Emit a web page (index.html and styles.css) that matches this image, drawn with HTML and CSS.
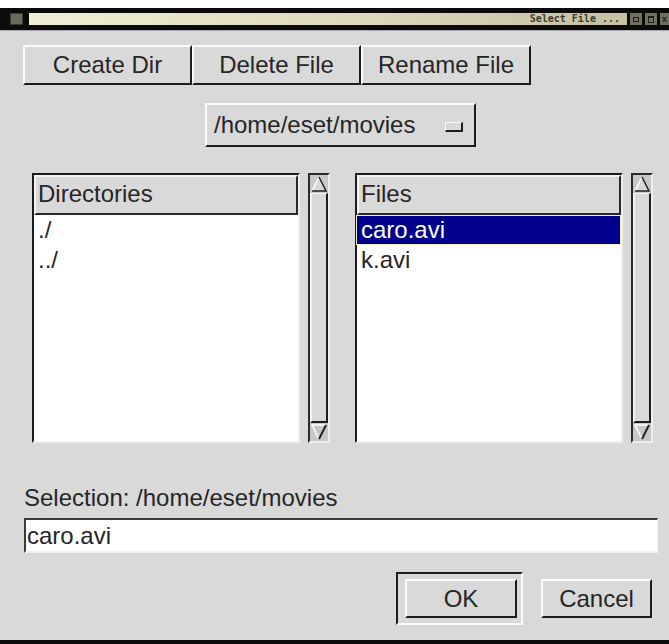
FILE: index.html
```html
<!DOCTYPE html>
<html lang="en">
<head>
<meta charset="utf-8">
<title>Select File</title>
<link rel="stylesheet" href="styles.css">
</head>
<body>
<div class="window">
  <div class="titlebar">
    <div class="tb-menu"></div>
    <div class="tb-title">Select File ...</div>
    <div class="tb-btn"><span class="tb-icon"></span></div>
    <div class="tb-btn"><span class="tb-icon tb-icon-max"></span></div>
    <div class="tb-btn tb-btn-last"><span class="tb-x">x</span></div>
  </div>

  <div class="client">
    <div class="toolbar">
      <button class="btn btn-tool">Create Dir</button>
      <button class="btn btn-tool">Delete File</button>
      <button class="btn btn-tool btn-wide">Rename File</button>
    </div>

    <div class="path-row">
      <button class="btn option-menu">
        <span class="option-label">/home/eset/movies</span>
        <span class="option-indicator"></span>
      </button>
    </div>

    <div class="lists">
      <div class="pane">
        <div class="listbox">
          <div class="list-head">Directories</div>
          <div class="list-body">
            <div class="list-row">./</div>
            <div class="list-row">../</div>
          </div>
        </div>
        <div class="scrollbar">
          <svg class="arrow" width="18" height="18" viewBox="0 0 18 18">
            <polygon points="9,2 2,16 16,16" fill="#d9d9d9"/>
            <polyline points="2,16 9,2" fill="none" stroke="#ffffff" stroke-width="1.5"/>
            <polyline points="9,2 16,16 2,16" fill="none" stroke="#222" stroke-width="1.5"/>
          </svg>
          <div class="slider"></div>
          <svg class="arrow" width="18" height="18" viewBox="0 0 18 18">
            <polygon points="2,2 16,2 9,16" fill="#c8c8c8"/>
            <polyline points="9,16 2,2 16,2" fill="none" stroke="#ffffff" stroke-width="1.5"/>
            <polyline points="16,2 9,16" fill="none" stroke="#222" stroke-width="2"/>
          </svg>
        </div>
      </div>

      <div class="pane">
        <div class="listbox">
          <div class="list-head">Files</div>
          <div class="list-body">
            <div class="list-row selected">caro.avi</div>
            <div class="list-row">k.avi</div>
          </div>
        </div>
        <div class="scrollbar">
          <svg class="arrow" width="18" height="18" viewBox="0 0 18 18">
            <polygon points="9,2 2,16 16,16" fill="#d9d9d9"/>
            <polyline points="2,16 9,2" fill="none" stroke="#ffffff" stroke-width="1.5"/>
            <polyline points="9,2 16,16 2,16" fill="none" stroke="#222" stroke-width="1.5"/>
          </svg>
          <div class="slider"></div>
          <svg class="arrow" width="18" height="18" viewBox="0 0 18 18">
            <polygon points="2,2 16,2 9,16" fill="#c8c8c8"/>
            <polyline points="9,16 2,2 16,2" fill="none" stroke="#ffffff" stroke-width="1.5"/>
            <polyline points="16,2 9,16" fill="none" stroke="#222" stroke-width="2"/>
          </svg>
        </div>
      </div>
    </div>

    <div class="selection-label">Selection: /home/eset/movies</div>
    <div class="entry">caro.avi</div>

    <div class="actions">
      <div class="default-ring">
        <button class="btn btn-action">OK</button>
      </div>
      <button class="btn btn-action btn-cancel">Cancel</button>
    </div>
  </div>
</div>
</body>
</html>
```

FILE: styles.css
```css
html, body {
  margin: 0;
  padding: 0;
  background: #ffffff;
}

body {
  width: 669px;
  height: 644px;
  overflow: hidden;
  font-family: "Liberation Sans", Arial, sans-serif;
  font-size: 24px;
  color: #262626;
}

.window {
  margin-top: 8px;
  height: 636px;
  display: flex;
  flex-direction: column;
  background: #d9d9d9;
  border-bottom: 4px solid #0d0d0d;
  box-sizing: border-box;
}

/* window manager title bar */
.titlebar {
  height: 22px;
  flex: none;
  background: #0b0b0b;
  display: flex;
  align-items: center;
  padding-left: 10px;
}

.tb-menu {
  width: 11px;
  height: 10px;
  background: #6a6a5c;
  border: 1px solid #3c3c33;
}

.tb-title {
  margin-left: 6px;
  width: 598px;
  height: 12px;
  box-sizing: border-box;
  background: linear-gradient(to right, #f0eed4 0%, #dcd9bc 55%, #c4c0a2 100%);
  font-family: "DejaVu Sans Mono", monospace;
  font-weight: bold;
  font-size: 10px;
  line-height: 12px;
  color: #3a3a30;
  text-align: right;
  padding-right: 7px;
}

.tb-btn {
  width: 12px;
  height: 12px;
  margin-left: 3px;
  background: #6f6f62;
  display: flex;
  align-items: center;
  justify-content: center;
}

.tb-icon {
  width: 4px;
  height: 3px;
  border: 1px solid #1e1e1a;
}

.tb-icon-max {
  width: 4px;
  height: 4px;
  border-width: 2px 1px 1px 1px;
}

.tb-btn-last {
  width: 9px;
}

.tb-x {
  font-family: "DejaVu Sans Mono", monospace;
  font-size: 9px;
  line-height: 9px;
  color: #222;
  font-weight: bold;
}

/* dialog contents */
.client {
  flex: 1;
  border-top: 1px solid #a9a9a9;
  display: flex;
  flex-direction: column;
}

.btn {
  font-family: "Liberation Sans", Arial, sans-serif;
  font-size: 24px;
  color: #262626;
  background: #d9d9d9;
  border-style: solid;
  border-width: 2px;
  border-color: #fbfbfb #1c1c1c #1c1c1c #fbfbfb;
  padding: 0;
  margin: 0;
  box-sizing: border-box;
}

.toolbar {
  display: flex;
  margin: 14px 0 0 23px;
}

.btn-tool {
  width: 169px;
  height: 40px;
}

.btn-wide {
  width: 170px;
}

.path-row {
  margin: 18px 0 0 205px;
}

.option-menu {
  width: 271px;
  height: 44px;
  display: flex;
  align-items: center;
  justify-content: space-between;
  padding: 0 11px 0 7px;
}

.option-indicator {
  width: 18px;
  height: 10px;
  box-sizing: border-box;
  border-style: solid;
  border-width: 1px 2px 2px 1px;
  border-color: #fbfbfb #1c1c1c #1c1c1c #fbfbfb;
  margin-top: 4px;
}

.lists {
  display: flex;
  gap: 25px;
  margin: 26px 0 0 32px;
  height: 270px;
}

.pane {
  display: flex;
  gap: 8px;
}

.listbox {
  width: 268px;
  height: 270px;
  box-sizing: border-box;
  border-style: solid;
  border-width: 2px;
  border-color: #1c1c1c #eeeeee #eeeeee #1c1c1c;
  background: #ffffff;
  display: flex;
  flex-direction: column;
}

.list-head {
  height: 40px;
  flex: none;
  box-sizing: border-box;
  background: #d9d9d9;
  border-style: solid;
  border-width: 2px;
  border-color: #f4f4f4 #2a2a2a #2a2a2a #f4f4f4;
  padding-left: 2px;
  line-height: 34px;
}

.list-body {
  flex: 1;
  padding-top: 1px;
}

.list-row {
  height: 28px;
  line-height: 28px;
  padding-left: 4px;
  margin-bottom: 2px;
  margin-right: 1px;
}

.list-row.selected {
  background: #00008a;
  color: #ffffff;
  outline: 1px solid #f3f0c4;
}

.scrollbar {
  width: 22px;
  height: 270px;
  box-sizing: border-box;
  border-style: solid;
  border-width: 2px;
  border-color: #2a2a2a #eeeeee #eeeeee #2a2a2a;
  background: #c8c8c8;
  display: flex;
  flex-direction: column;
  align-items: center;
}

.arrow {
  flex: none;
}

.slider {
  flex: 1;
  width: 18px;
  box-sizing: border-box;
  background: #d9d9d9;
  border-style: solid;
  border-width: 1px 2px 2px 2px;
  border-color: #f4f4f4 #1c1c1c #1c1c1c #f4f4f4;
}

.selection-label {
  margin: 41px 0 0 24px;
  height: 28px;
  line-height: 28px;
}

.entry {
  margin: 6px 0 0 24px;
  width: 634px;
  height: 35px;
  box-sizing: border-box;
  background: #ffffff;
  border-style: solid;
  border-width: 2px 1px 2px 2px;
  border-color: #3a3a3a #f2f2f2 #f2f2f2 #3a3a3a;
  padding-left: 1px;
  line-height: 31px;
}

.actions {
  display: flex;
  align-items: center;
  margin: 19px 0 0 396px;
}

.default-ring {
  box-sizing: border-box;
  border-style: solid;
  border-width: 2px;
  border-color: #1c1c1c #fbfbfb #fbfbfb #1c1c1c;
  padding: 5px 4px 5px 7px;
}

.btn-action {
  width: 112px;
  height: 39px;
  display: block;
}

.btn-cancel {
  width: 111px;
  margin-left: 18px;
}
```
